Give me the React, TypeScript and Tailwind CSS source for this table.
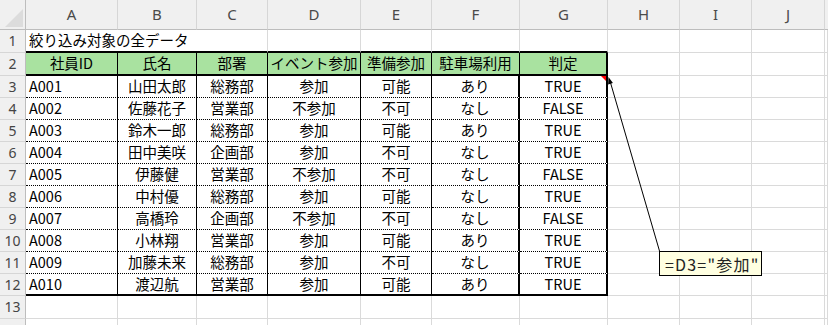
import React from "react";

const COLS = ["A", "B", "C", "D", "E", "F", "G", "H", "I", "J"];

const HEAD = ["社員ID", "氏名", "部署", "イベント参加", "準備参加", "駐車場利用", "判定"];

const DATA: string[][] = [
  ["A001", "山田太郎", "総務部", "参加", "可能", "あり", "TRUE"],
  ["A002", "佐藤花子", "営業部", "不参加", "不可", "なし", "FALSE"],
  ["A003", "鈴木一郎", "総務部", "参加", "可能", "あり", "TRUE"],
  ["A004", "田中美咲", "企画部", "参加", "不可", "なし", "TRUE"],
  ["A005", "伊藤健", "営業部", "不参加", "不可", "なし", "FALSE"],
  ["A006", "中村優", "総務部", "参加", "可能", "なし", "TRUE"],
  ["A007", "高橋玲", "企画部", "不参加", "不可", "なし", "FALSE"],
  ["A008", "小林翔", "営業部", "参加", "可能", "あり", "TRUE"],
  ["A009", "加藤未来", "総務部", "参加", "不可", "なし", "TRUE"],
  ["A010", "渡辺航", "営業部", "参加", "可能", "あり", "TRUE"],
];

const grid = "border-r border-b border-[#dadada]";

function RowHead({ n }: { n?: number }) {
  return (
    <div className="flex items-center justify-center bg-[#f0f0f0] border-r border-r-[#bdbdbd] border-b border-b-[#d6d6d6] text-[14px] text-[#444] font-['Noto_Sans',sans-serif]">
      {n}
    </div>
  );
}

function Empty() {
  return <div className={grid} />;
}

function dataCellClass(row: number, col: number): string {
  const last = row === DATA.length - 1;
  const align = col === 0 ? "justify-start pl-[3px]" : "justify-center";
  if (col >= 5) {
    // F and G carry the heavy frame of the result column
    return last
      ? `flex items-center ${align} border-r-2 border-b-2 border-black`
      : `flex items-center ${align} border-r-2 border-r-black [border-bottom:1px_dotted_#000]`;
  }
  return last
    ? `flex items-center ${align} border-r border-b-2 border-black`
    : `flex items-center ${align} border-r border-r-black [border-bottom:1px_dotted_#000]`;
}

export default function App() {
  return (
    <div className="relative w-[828px] h-[325px] overflow-hidden bg-white text-black font-['Noto_Sans_CJK_JP',sans-serif] text-[14.5px] leading-none">
      <div className="grid grid-cols-[26px_92px_79px_71px_93px_71px_88px_88px_72px_72px_73px_1fr] grid-rows-[30px_23px_23px_repeat(10,22px)_23px_22px]">
        {/* column header strip */}
        <div className="relative bg-[#f0f0f0] border-r border-b border-[#bdbdbd]">
          <svg className="absolute inset-0" width="26" height="30" viewBox="0 0 26 30">
            <polygon points="23,9 23,27 5,27" fill="#dcdcdc" />
          </svg>
        </div>
        {COLS.map((c) => (
          <div
            key={c}
            className="flex items-center justify-center bg-[#f0f0f0] border-r border-r-[#d6d6d6] border-b border-b-[#bdbdbd] text-[15px] text-[#4a4a4a] font-['Noto_Sans',sans-serif]"
          >
            {c}
          </div>
        ))}
        <div className="bg-[#f0f0f0] border-b border-b-[#bdbdbd]" />

        {/* row 1: title overflowing across A:C */}
        <RowHead n={1} />
        <div className="col-span-3 flex items-center pl-[3px] border-r border-r-[#dadada] border-b-2 border-b-black">
          絞り込み対象の全データ
        </div>
        <div className="border-r border-r-[#dadada] border-b-2 border-b-black" />
        <div className="border-r border-r-[#dadada] border-b-2 border-b-black" />
        <div className="border-r border-r-[#dadada] border-b-2 border-b-black" />
        <div className="border-r border-r-[#dadada] border-b-2 border-b-black" />
        <Empty />
        <Empty />
        <Empty />
        <Empty />

        {/* row 2: table header */}
        <RowHead n={2} />
        {HEAD.map((h, i) => (
          <div
            key={h}
            className={
              i === 6
                ? "flex items-center justify-center bg-[#a9e2a0] border-r-2 border-b-2 border-black"
                : "flex items-center justify-center bg-[#a9e2a0] border-r border-b-2 border-black"
            }
          >
            {h}
          </div>
        ))}
        <Empty />
        <Empty />
        <Empty />
        <Empty />

        {/* rows 3-12: records */}
        {DATA.map((r, ri) => (
          <React.Fragment key={r[0]}>
            <RowHead n={ri + 3} />
            {r.map((v, ci) => (
              <div key={ci} className={dataCellClass(ri, ci)}>
                {v}
              </div>
            ))}
            <Empty />
            <Empty />
            <Empty />
            <Empty />
          </React.Fragment>
        ))}

        {/* row 13 and the top sliver of the next row */}
        <RowHead n={13} />
        {COLS.map((c) => (
          <Empty key={c} />
        ))}
        <Empty />
        <RowHead />
        {COLS.map((c) => (
          <Empty key={c} />
        ))}
        <Empty />
      </div>

      {/* comment indicator and leader arrow */}
      <svg className="absolute inset-0 pointer-events-none" width="828" height="325" viewBox="0 0 828 325">
        <polygon points="601,76 606,76 606,81" fill="#ff0000" />
        <line x1="659.5" y1="251" x2="610" y2="81" stroke="#000" strokeWidth="1" />
        <polygon points="608.5,77 612.9,83 608.1,84.4" fill="#000" />
      </svg>

      {/* comment note */}
      <div className="absolute left-[659px] top-[251px] w-[103px] h-[25px] flex items-center pl-[5px] bg-[#ffffe1] border border-black text-[16px] tracking-[1.2px] text-[#222]">
        =D3="参加"
      </div>
    </div>
  );
}
